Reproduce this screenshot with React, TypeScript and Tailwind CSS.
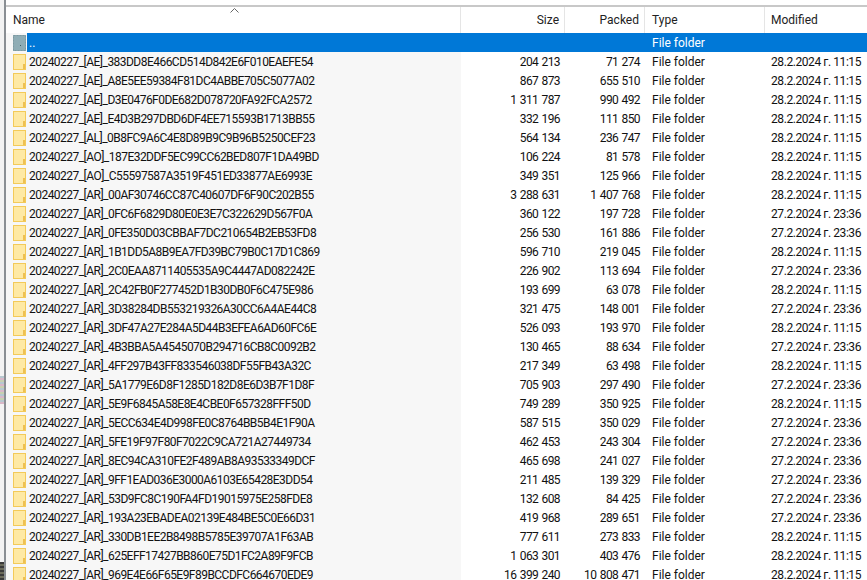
const font = "font-['Roboto','Open_Sans',sans-serif]";

const A = "28.2.2024 г. 11:15";
const B = "27.2.2024 г. 23:36";

// name, size, packed, modified
const rows: [string, string, string, string][] = [
  ["[AE]_383DD8E466CD514D842E6F010EAEFE54", "204 213", "71 274", A],
  ["[AE]_A8E5EE59384F81DC4ABBE705C5077A02", "867 873", "655 510", A],
  ["[AE]_D3E0476F0DE682D078720FA92FCA2572", "1 311 787", "990 492", A],
  ["[AE]_E4D3B297DBD6DF4EE715593B1713BB55", "332 196", "111 850", A],
  ["[AL]_0B8FC9A6C4E8D89B9C9B96B5250CEF23", "564 134", "236 747", A],
  ["[AO]_187E32DDF5EC99CC62BED807F1DA49BD", "106 224", "81 578", A],
  ["[AO]_C55597587A3519F451ED33877AE6993E", "349 351", "125 966", A],
  ["[AR]_00AF30746CC87C40607DF6F90C202B55", "3 288 631", "1 407 768", A],
  ["[AR]_0FC6F6829D80E0E3E7C322629D567F0A", "360 122", "197 728", B],
  ["[AR]_0FE350D03CBBAF7DC210654B2EB53FD8", "256 530", "161 886", B],
  ["[AR]_1B1DD5A8B9EA7FD39BC79B0C17D1C869", "596 710", "219 045", A],
  ["[AR]_2C0EAA8711405535A9C4447AD082242E", "226 902", "113 694", B],
  ["[AR]_2C42FB0F277452D1B30DB0F6C475E986", "193 699", "63 078", A],
  ["[AR]_3D38284DB553219326A30CC6A4AE44C8", "321 475", "148 001", B],
  ["[AR]_3DF47A27E284A5D44B3EFEA6AD60FC6E", "526 093", "193 970", A],
  ["[AR]_4B3BBA5A4545070B294716CB8C0092B2", "130 465", "88 634", B],
  ["[AR]_4FF297B43FF833546038DF55FB43A32C", "217 349", "63 498", A],
  ["[AR]_5A1779E6D8F1285D182D8E6D3B7F1D8F", "705 903", "297 490", B],
  ["[AR]_5E9F6845A58E8E4CBE0F657328FFF50D", "749 289", "350 925", A],
  ["[AR]_5ECC634E4D998FE0C8764BB5B4E1F90A", "587 515", "350 029", B],
  ["[AR]_5FE19F97F80F7022C9CA721A27449734", "462 453", "243 304", B],
  ["[AR]_8EC94CA310FE2F489AB8A93533349DCF", "465 698", "241 027", B],
  ["[AR]_9FF1EAD036E3000A6103E65428E3DD54", "211 485", "139 329", B],
  ["[AR]_53D9FC8C190FA4FD19015975E258FDE8", "132 608", "84 425", B],
  ["[AR]_193A23EBADEA02139E484BE5C0E66D31", "419 968", "289 651", B],
  ["[AR]_330DB1EE2B8498B5785E39707A1F63AB", "777 611", "273 833", A],
  ["[AR]_625EFF17427BB860E75D1FC2A89F9FCB", "1 063 301", "403 476", A],
  ["[AR]_969E4E66F65E9F89BCCDFC664670EDE9", "16 399 240", "10 808 471", A],
];

function FolderIcon() {
  return (
    <svg width="13" height="16" viewBox="0 0 13 16" className="shrink-0">
      <rect x="0.5" y="0.5" width="12" height="15" fill="#fee9a4" stroke="#f3ca59" />
      <rect x="10" y="10" width="2" height="5" fill="#eec052" />
    </svg>
  );
}

function UpIcon() {
  return (
    <svg width="13" height="16" viewBox="0 0 13 16" className="shrink-0">
      <rect x="0" y="0" width="13" height="16" fill="#8fadb5" />
      <rect x="0.5" y="0.5" width="12" height="15" fill="none" stroke="#7d98a0" strokeDasharray="2 1" />
      <rect x="7" y="10" width="1" height="1" fill="#3f5a62" />
    </svg>
  );
}

function Row({ name, size, packed, modified }: { name: string; size: string; packed: string; modified: string }) {
  return (
    <div className="flex h-[19px] items-center">
      <div className="flex h-full w-[455px] shrink-0 items-center bg-[#f7f7f7] pl-[7px]">
        <FolderIcon />
        <span className="ml-[3px] whitespace-nowrap tracking-[-0.53px]">20240227_{name}</span>
      </div>
      <div className="w-[104px] shrink-0 whitespace-nowrap pr-[5px] text-right tracking-[-0.6px] [word-spacing:1px]">{size}</div>
      <div className="w-[80px] shrink-0 whitespace-nowrap pr-[5px] text-right tracking-[-0.6px] [word-spacing:1px]">{packed}</div>
      <div className="w-[120px] shrink-0 whitespace-nowrap pl-[7px]">File folder</div>
      <div className="whitespace-nowrap pl-[6px] tracking-[-0.42px]">{modified}</div>
    </div>
  );
}

export default function App() {
  return (
    <div className={`flex h-[580px] w-[867px] overflow-hidden bg-white text-[12px] text-[#111] ${font}`}>
      {/* desktop sliver behind the window */}
      <div className="flex w-[4px] shrink-0 flex-col bg-[#f3f3f3]">
        <div className="mt-[376px] h-[28px] bg-[repeating-linear-gradient(0deg,#d9b8c8_0px,#d9b8c8_2px,#b8c8d0_2px,#b8c8d0_4px,#c8d0b0_4px,#c8d0b0_6px)]" />
        <div className="mt-[158px] h-[18px] bg-[repeating-linear-gradient(0deg,#3a3a3a_0px,#3a3a3a_2px,#6a6a5a_2px,#6a6a5a_4px)]" />
      </div>
      <div className="w-[2px] shrink-0 bg-[#8a8f94]" />
      <div className="min-w-0 flex-1">
        <div className="h-[5px]" />
        <div className="h-[2px] bg-[#c8c8c8]" />
        {/* column header */}
        <div className="flex h-[26px] text-[#222]">
          <div className="relative w-[455px] shrink-0 border-r border-[#e5e5e5] pl-[7px] leading-[27px]">
            Name
            <svg width="9" height="5" viewBox="0 0 9 5" className="absolute left-[224px] top-[1px]">
              <path d="M0.5 4.5 L4.5 0.5 L8.5 4.5" fill="none" stroke="#666" />
            </svg>
          </div>
          <div className="w-[104px] shrink-0 border-r border-[#e5e5e5] pr-[5px] text-right leading-[27px]">Size</div>
          <div className="w-[80px] shrink-0 border-r border-[#e5e5e5] pr-[5px] text-right leading-[27px]">Packed</div>
          <div className="w-[120px] shrink-0 border-r border-[#e5e5e5] pl-[7px] leading-[27px]">Type</div>
          <div className="pl-[6px] leading-[27px]">Modified</div>
        </div>
        {/* parent folder row */}
        <div className="flex h-[19px] items-center">
          <div className="flex h-full w-[21px] shrink-0 items-center bg-[#f7f7f7] pl-[7px]">
            <UpIcon />
          </div>
          <div className="flex h-full flex-1 items-center bg-[#0078d7] text-white">
            <div className="w-[434px] shrink-0 pl-[2px]">..</div>
            <div className="w-[184px] shrink-0" />
            <div className="pl-[7px]">File folder</div>
          </div>
        </div>
        {rows.map((r) => (
          <Row key={r[0]} name={r[0]} size={r[1]} packed={r[2]} modified={r[3]} />
        ))}
      </div>
    </div>
  );
}
